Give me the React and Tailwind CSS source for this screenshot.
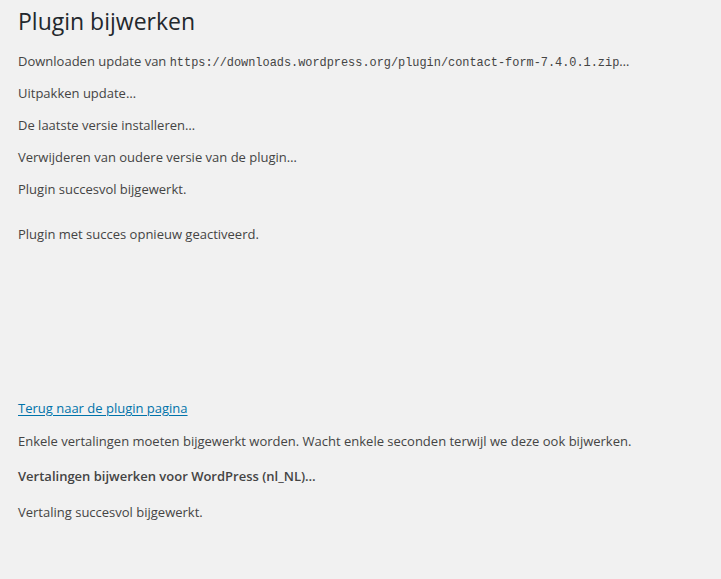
export default function App() {
    const steps = [
        'Uitpakken update…',
        'De laatste versie installeren…',
        'Verwijderen van oudere versie van de plugin…',
    ];

    return (
        <div className="min-h-[579px] w-full bg-[#f1f1f1] text-[#444] text-[13px] leading-[19.5px] font-['Open_Sans',sans-serif]">
            <div className="pl-[18px] pr-[20px] pt-[6px]">
                <h1 className="text-[23px] leading-[30px] font-normal text-[#23282d]">Plugin bijwerken</h1>

                <div className="mt-[16px] flex flex-col gap-[12.5px]">
                    <p className="h-[19.5px]">
                        Downloaden update van{' '}
                        <code className="font-['Liberation_Mono',monospace] text-[11.9px] leading-[0]">
                            https://downloads.wordpress.org/plugin/contact-form-7.4.0.1.zip
                        </code>
                        …
                    </p>
                    {steps.map((s) => (
                        <p key={s}>{s}</p>
                    ))}
                    <p>Plugin succesvol bijgewerkt.</p>
                </div>

                <p className="mt-[25px]">Plugin met succes opnieuw geactiveerd.</p>

                {/* activation frame is empty */}
                <div className="h-[155px]" />

                <p>
                    <a href="#" className="text-[#0073aa] underline underline-offset-[2px]">
                        Terug naar de plugin pagina
                    </a>
                </p>
                <p className="mt-[13px]">
                    Enkele vertalingen moeten bijgewerkt worden. Wacht enkele seconden terwijl we deze ook bijwerken.
                </p>
                <p className="mt-[16px] font-semibold">Vertalingen bijwerken voor WordPress (nl_NL)…</p>
                <p className="mt-[16px]">Vertaling succesvol bijgewerkt.</p>
            </div>
        </div>
    );
}
